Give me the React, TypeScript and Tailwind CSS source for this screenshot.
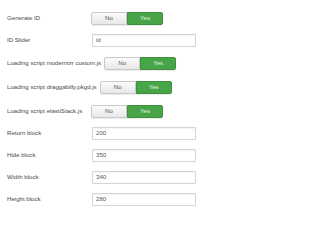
const rows = [
  { label: "Generate ID", type: "toggle", gap: "mt-[12px]" },
  { label: "ID Slider", type: "input", value: "id", gap: "mt-[9px]" },
  { label: "Loading script modernizr custom.js", type: "toggle", gap: "mt-[10px]" },
  { label: "Loading script draggabilly.pkgd.js", type: "toggle", gap: "mt-[11px]" },
  { label: "Loading script elastiStack.js", type: "toggle", gap: "mt-[11px]" },
  { label: "Return block", type: "input", value: "200", gap: "mt-[9px]" },
  { label: "Hide block", type: "input", value: "350", gap: "mt-[9px]" },
  { label: "Width block", type: "input", value: "340", gap: "mt-[9px]" },
  { label: "Height block", type: "input", value: "280", gap: "mt-[9px]" },
];

const Toggle = () => (
  <div className="flex h-[13px] w-[72px] rounded-[2px] shadow-[0_1px_1px_rgba(0,0,0,0.08)]">
    <div className="flex w-[36px] items-center justify-center rounded-l-[2px] border border-[#c9c9c9] bg-gradient-to-b from-[#fbfbfb] to-[#e8e8e8] text-[#555]">
      No
    </div>
    <div className="flex w-[36px] items-center justify-center rounded-r-[2px] border border-[#3f8f3f] bg-[#47a447] text-[#e6f3e6]">
      Yes
    </div>
  </div>
);

export default function App() {
  return (
    <div className="h-[231px] w-[250px] bg-white pl-[7px] font-['Liberation_Sans',Arial,sans-serif] text-[6.1px] leading-none text-[#4a4a4a]">
      {rows.map((row) => (
        <div key={row.label} className={`flex items-center ${row.gap}`}>
          <div className="min-w-[84px] shrink-0 pr-[3px]">{row.label}</div>
          {row.type === "toggle" ? (
            <Toggle />
          ) : (
            <div className="ml-[1px] flex h-[13px] w-[104px] items-center rounded-[1px] border border-[#d4d4d4] px-[3px] text-[#555] shadow-[inset_0_1px_1px_rgba(0,0,0,0.05)]">
              {row.value}
            </div>
          )}
        </div>
      ))}
    </div>
  );
}
